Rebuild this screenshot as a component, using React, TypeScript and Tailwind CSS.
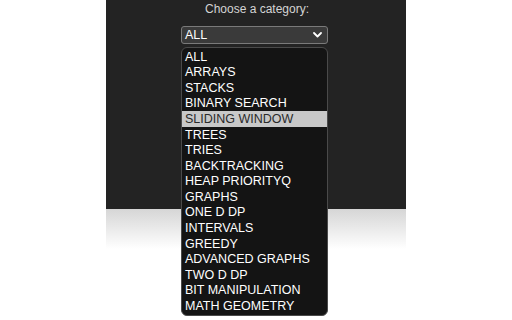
import React from 'react';

const categories = [
  'ALL',
  'ARRAYS',
  'STACKS',
  'BINARY SEARCH',
  'SLIDING WINDOW',
  'TREES',
  'TRIES',
  'BACKTRACKING',
  'HEAP PRIORITYQ',
  'GRAPHS',
  'ONE D DP',
  'INTERVALS',
  'GREEDY',
  'ADVANCED GRAPHS',
  'TWO D DP',
  'BIT MANIPULATION',
  'MATH GEOMETRY',
];

export default function App() {
  const selected = 'SLIDING WINDOW';

  return (
    <div className="w-[512px] h-[320px] bg-white overflow-hidden font-['Liberation_Sans',Arial,sans-serif]">
      <div className="w-[300px] mx-auto">
        {/* Popup panel */}
        <div className="h-[209px] bg-[#232323] flex flex-col pt-[2px]">
          <p className="text-[12px] text-[#d4d4d4] leading-[14px] text-center pl-[2px]">Choose a category:</p>

          <div className="relative mt-[10px] ml-[75px] w-[147px]">
            <div className="h-[18px] rounded-[3px] border border-[#7a7a7a] bg-[#3a3a3a] flex items-center justify-between pl-[3px] pr-[5px]">
              <span className="text-[12.5px] text-white leading-none">ALL</span>
              <svg width="9" height="6" viewBox="0 0 9 6" fill="none">
                <path d="M1 1l3.5 3.5L8 1" stroke="white" strokeWidth="1.8" strokeLinecap="round" strokeLinejoin="round" />
              </svg>
            </div>

            {/* Open options list */}
            <ul className="absolute left-0 top-[21px] w-[147px] rounded-[6px] border border-[#4a4a4a] bg-[#141414] py-[1px] z-10">
              {categories.map((c) => (
                <li
                  key={c}
                  className={
                    c === selected
                      ? 'h-[15.6px] pl-[3px] flex items-center text-[12.5px] leading-none bg-[#c8c8c8] text-[#2a2a2a]'
                      : 'h-[15.6px] pl-[3px] flex items-center text-[12.5px] leading-none text-white'
                  }
                >
                  {c}
                </li>
              ))}
            </ul>
          </div>
        </div>
        {/* soft shadow under the panel */}
        <div className="h-[40px] bg-gradient-to-b from-[#d6d6d6] to-white" />
      </div>
    </div>
  );
}
